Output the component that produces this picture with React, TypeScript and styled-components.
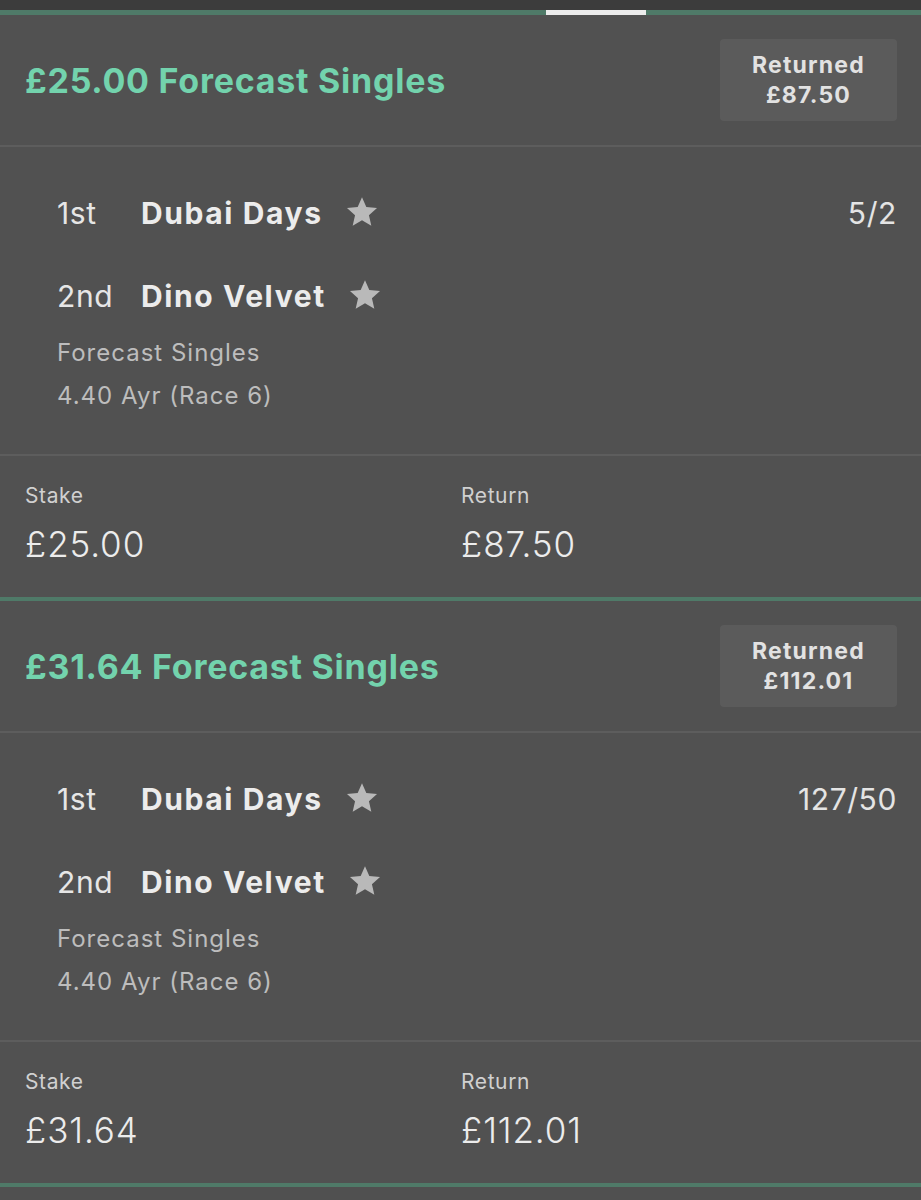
import React from "react";
import styled, { createGlobalStyle } from "styled-components";

const GlobalStyle = createGlobalStyle`
  html, body {
    margin: 0;
    padding: 0;
    background: #505050;
    font-family: Inter, "Noto Sans", "Liberation Sans", sans-serif;
    -webkit-font-smoothing: antialiased;
  }
`;

interface Runner {
  place: string;
  name: string;
}

interface Bet {
  stake: string;
  returned: string;
  odds: string;
  runners: Runner[];
  market: string;
  race: string;
}

const bets: Bet[] = [
  {
    stake: "£25.00",
    returned: "£87.50",
    odds: "5/2",
    runners: [
      { place: "1st", name: "Dubai Days" },
      { place: "2nd", name: "Dino Velvet" },
    ],
    market: "Forecast Singles",
    race: "4.40 Ayr (Race 6)",
  },
  {
    stake: "£31.64",
    returned: "£112.01",
    odds: "127/50",
    runners: [
      { place: "1st", name: "Dubai Days" },
      { place: "2nd", name: "Dino Velvet" },
    ],
    market: "Forecast Singles",
    race: "4.40 Ayr (Race 6)",
  },
];

const Star = () => (
  <svg width="34" height="34" viewBox="0 0 24 24">
    <path
      d="M12 1.6l3.05 6.95 7.55.7-5.7 5.02 1.68 7.4L12 17.8l-6.58 3.87 1.68-7.4-5.7-5.02 7.55-.7z"
      fill="#b9b9b9"
    />
  </svg>
);

export default function App() {
  return (
    <Page>
      <GlobalStyle />
      <TopBar />
      <TabTrack>
        <TabIndicator />
      </TabTrack>
      {bets.map((bet, i) => (
        <Card key={i}>
          <Header>
            <Title>
              {bet.stake} {bet.market}
            </Title>
            <ReturnedBox>
              <span>Returned</span>
              <span>{bet.returned}</span>
            </ReturnedBox>
          </Header>
          <Body>
            {bet.runners.map((r, j) => (
              <RunnerRow key={j}>
                <Place>{r.place}</Place>
                <Name>{r.name}</Name>
                <Star />
                {j === 0 && <Odds>{bet.odds}</Odds>}
              </RunnerRow>
            ))}
            <MetaBlock>
              <Meta>{bet.market}</Meta>
              <Meta>{bet.race}</Meta>
            </MetaBlock>
          </Body>
          <Footer>
            <Stat>
              <Label>Stake</Label>
              <Value>{bet.stake}</Value>
            </Stat>
            <Stat>
              <Label>Return</Label>
              <Value>{bet.returned}</Value>
            </Stat>
          </Footer>
        </Card>
      ))}
    </Page>
  );
}

const Page = styled.div`
  width: 921px;
  min-height: 1200px;
  background: #505050;
`;

const TopBar = styled.div`
  height: 10px;
  background: #3c3c3c;
`;

const TabTrack = styled.div`
  height: 5px;
  background: #4f7a68;
  padding-left: 546px;
`;

const TabIndicator = styled.div`
  width: 100px;
  height: 5px;
  background: #ececec;
`;

const Card = styled.section`
  background: #515151;
  border-bottom: 4px solid #4f7a68;
`;

const Header = styled.div`
  height: 130px;
  display: flex;
  align-items: center;
  justify-content: space-between;
  padding: 0 24px 0 25px;
  border-bottom: 2px solid #5d5d5d;
`;

const Title = styled.h2`
  margin: 0;
  font-size: 34px;
  font-weight: 700;
  color: #73d3ad;
  letter-spacing: 0.75px;
`;

const ReturnedBox = styled.div`
  width: 177px;
  height: 82px;
  border-radius: 4px;
  background: #5b5b5b;
  display: flex;
  flex-direction: column;
  align-items: center;
  justify-content: center;
  font-size: 23px;
  font-weight: 700;
  letter-spacing: 1.2px;
  color: #e2e2e2;
  line-height: 30px;
`;

const Body = styled.div`
  padding: 46px 24px 37px 57px;
  border-bottom: 2px solid #5d5d5d;
`;

const RunnerRow = styled.div`
  height: 40px;
  display: flex;
  align-items: center;
  & + & {
    margin-top: 43px;
  }
  svg {
    margin-left: 22px;
    margin-top: -2px;
  }
`;

const Place = styled.span`
  width: 84px;
  font-size: 30px;
  font-weight: 400;
  letter-spacing: 0.6px;
  color: #e6e6e6;
`;

const Name = styled.span`
  font-size: 30px;
  font-weight: 700;
  letter-spacing: 1.6px;
  color: #ececec;
`;

const Odds = styled.span`
  margin-left: auto;
  font-size: 30px;
  letter-spacing: 0.6px;
  color: #e4e4e4;
`;

const MetaBlock = styled.div`
  margin-top: 15px;
`;

const Meta = styled.div`
  font-size: 24px;
  line-height: 43px;
  letter-spacing: 1px;
  color: #bdbdbd;
`;

const Footer = styled.div`
  display: grid;
  grid-template-columns: 436px 1fr;
  padding: 28px 25px 33px;
`;

const Stat = styled.div`
  display: flex;
  flex-direction: column;
  gap: 16px;
`;

const Label = styled.span`
  font-size: 21px;
  line-height: 24px;
  letter-spacing: 0.6px;
  color: #d0d0d0;
`;

const Value = styled.span`
  font-size: 35px;
  line-height: 40px;
  font-weight: 300;
  letter-spacing: 0.9px;
  color: #ececec;
`;
